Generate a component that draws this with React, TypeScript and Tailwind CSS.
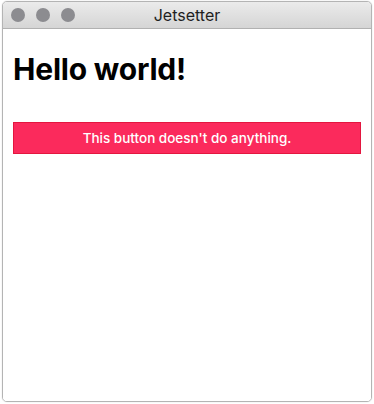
export default function App() {
  return (
    <div className="w-[374px] h-[404px] bg-white p-[1px_2px_2px_2px]" style={{ fontFamily: "Inter, 'Helvetica Neue', Arial, sans-serif" }}>
      <div className="flex flex-col h-full rounded-[5px] border border-[#b4b4b4] overflow-hidden shadow-[0_0_1px_rgba(0,0,0,0.3)]">
        {/* Title bar */}
        <div className="relative flex items-center h-[27px] shrink-0 bg-gradient-to-b from-[#ebebeb] to-[#d5d5d5] border-b border-[#b1b1b1]">
          <div className="flex gap-[11px] pl-[8px]">
            <span className="shrink-0 w-[14px] h-[14px] rounded-full bg-[#8c8c90]" />
            <span className="shrink-0 w-[14px] h-[14px] rounded-full bg-[#8c8c90]" />
            <span className="shrink-0 w-[14px] h-[14px] rounded-full bg-[#8c8c90]" />
          </div>
          <span className="absolute inset-0 flex items-center justify-center text-[16px] text-[#1f1f1f]">Jetsetter</span>
        </div>

        {/* Content */}
        <div className="flex-1 bg-white px-[10px] pt-[22px]">
          <h1 className="text-[30px] font-bold leading-[36px] tracking-[-0.2px] text-black">Hello world!</h1>
          <button className="mt-[35px] w-full h-[32px] bg-[#fb2a5c] border border-[#e3163f] text-white text-[13.5px] font-medium">
            This button doesn't do anything.
          </button>
        </div>
      </div>
    </div>
  );
}
